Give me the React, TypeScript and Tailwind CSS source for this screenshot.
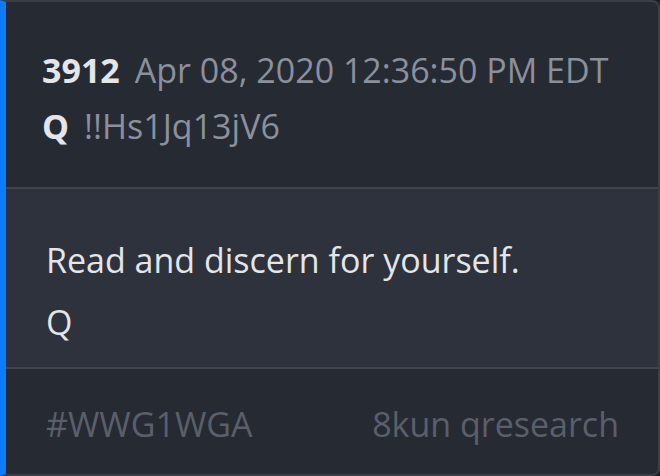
import React from 'react';

const font = { fontFamily: '"Open Sans", "Noto Sans", sans-serif' };

export default function App() {
  return (
    <div className="w-[660px] h-[476px] bg-[#1b1d22]" style={font}>
      <div className="flex h-full flex-col overflow-hidden rounded-r-lg border-2 border-l-[6px] border-[#3a3e47] border-l-[#0b7bff] bg-[#262a33] text-[34px]">
        <div className="flex h-[185px] shrink-0 flex-col pl-[36px] pt-[40px]">
          <div className="flex items-baseline leading-[56px]">
            <span className="font-bold text-[#e4e5e8]">3912</span>
            <span className="ml-[15px] text-[#8b909c]">Apr 08, 2020 12:36:50 PM EDT</span>
          </div>
          <div className="flex items-baseline leading-[56px]">
            <span className="font-bold text-[#e4e5e8]">Q</span>
            <span className="ml-[15px] text-[#8b909c]">!!Hs1Jq13jV6</span>
          </div>
        </div>
        <div className="h-[182px] shrink-0 border-y-2 border-[#40444e] bg-[#2d323c] pl-[40px] pt-[40px] leading-[62px] text-[#e4e5e8]">
          <p>Read and discern for yourself.</p>
          <p>Q</p>
        </div>
        <div className="flex flex-1 items-center justify-between pl-[40px] pr-[39px] pt-[5px] text-[#5a5f6b]">
          <span>#WWG1WGA</span>
          <span>8kun qresearch</span>
        </div>
      </div>
    </div>
  );
}
